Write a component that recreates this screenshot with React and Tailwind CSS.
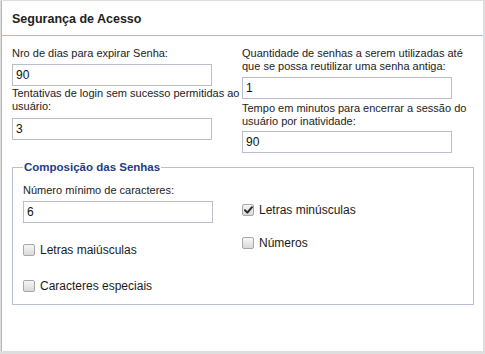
import React from "react";

function Check({ checked, label }) {
  return (
    <div className="flex items-center h-[16px]">
      <span className="relative w-[12px] h-[12px] rounded-[2px] border border-[#a7a7a7] bg-gradient-to-b from-[#f6f6f6] to-[#d9d9d9] flex items-center justify-center">
        {checked && (
          <svg width="9" height="8" viewBox="0 0 9 8">
            <path d="M1 4.2 L3.4 6.6 L8 1.2" stroke="#2a2a2a" strokeWidth="2" fill="none" strokeLinecap="round" strokeLinejoin="round" />
          </svg>
        )}
      </span>
      <span className="ml-[5px] text-[12px] leading-[16px] text-[#1a1a1a]">{label}</span>
    </div>
  );
}

function Input({ value, w }) {
  return (
    <div className={`${w} h-[22px] border border-[#babdcc] bg-white flex items-center pl-[3px] text-[12px] text-[#111]`}>
      {value}
    </div>
  );
}

export default function App() {
  return (
    <div
      className="w-[485px] h-[354px] bg-[#dedede] pt-px pl-px pr-[2px] pb-[3px]"
      style={{ fontFamily: '"Liberation Sans", Arial, sans-serif' }}
    >
      <div className="w-[482px] h-[350px] bg-white border-l border-[#a3b6e0]">
        <div className="h-[35px] border-b border-[#9cc0e8] px-[10px] flex items-center pt-[3px]">
          <h1 className="text-[12.5px] font-bold text-[#222]">Segurança de Acesso</h1>
        </div>
        <div className="px-[10px] pt-[11px] text-[11px] leading-[13px] text-[#222]">
          <div className="grid grid-cols-[230px_1fr]">
            <div className="flex flex-col">
              <div className="whitespace-nowrap">Nro de dias para expirar Senha:</div>
              <div className="mt-[4px]"><Input value="90" w="w-[200px]" /></div>
              <div className="mt-[1px] whitespace-nowrap">
                Tentativas de login sem sucesso permitidas ao
                <br />
                usuário:
              </div>
              <div className="mt-[5px]"><Input value="3" w="w-[200px]" /></div>
            </div>
            <div className="flex flex-col">
              <div className="whitespace-nowrap">
                Quantidade de senhas a serem utilizadas até
                <br />
                que se possa reutilizar uma senha antiga:
              </div>
              <div className="mt-[4px]"><Input value="1" w="w-[210px]" /></div>
              <div className="mt-[3px] whitespace-nowrap">
                Tempo em minutos para encerrar a sessão do
                <br />
                usuário por inatividade:
              </div>
              <div className="mt-[3px]"><Input value="90" w="w-[210px]" /></div>
            </div>
          </div>
          <fieldset className="mt-[7px] w-[462px] border border-[#b8bfd3] px-[10px] pb-[10px]">
            <legend className="px-[1px] text-[11.5px] leading-[14px] font-bold text-[#1f3c86]">
              Composição das Senhas
            </legend>
            <div className="grid grid-cols-[190px_1fr] gap-x-[29px]">
              <div className="flex flex-col pt-[10px]">
                <div>Número mínimo de caracteres:</div>
                <div className="mt-[4px]"><Input value="6" w="w-[190px]" /></div>
                <div className="mt-[19px]"><Check label="Letras maiúsculas" /></div>
                <div className="mt-[20px]"><Check label="Caracteres especiais" /></div>
              </div>
              <div className="flex flex-col pt-[28px]">
                <Check checked label="Letras minúsculas" />
                <div className="mt-[17px]"><Check label="Números" /></div>
              </div>
            </div>
          </fieldset>
        </div>
      </div>
    </div>
  );
}
